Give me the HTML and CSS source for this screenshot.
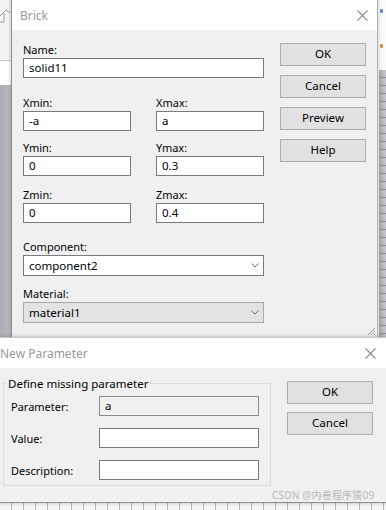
FILE: index.html
```html
<!DOCTYPE html>
<html>
<head>
	<meta charset="utf-8">
	<title>Brick</title>
	<link rel="stylesheet" href="styles.css">
</head>
<body>
<div class="desktop">
	<div class="bg bg-left">
		<div class="bg-left-top">
			<svg class="bg-icon" width="12" height="22" viewBox="0 0 12 22"><path d="M-2 14 L6 6 L10 9 M4 9 L4 18 L-2 18" fill="none" stroke="#9a9a9a" stroke-width="1"/></svg>
		</div>
		<div class="bg-left-white"></div>
		<div class="bg-left-grey"></div>
	</div>
	<div class="bg bg-right">
		<div class="bg-right-top">
			<span class="dot dot-blue"></span>
			<span class="dot dot-orange"></span>
		</div>
		<div class="bg-right-grid"></div>
	</div>
	<div class="bg bg-bottom"></div>

	<div class="window brick">
		<div class="titlebar">
			<span class="title">Brick</span>
			<svg class="close" width="11" height="11" viewBox="0 0 11 11"><path d="M0.5 0.5 L10.5 10.5 M10.5 0.5 L0.5 10.5" stroke="#8a8a8a" stroke-width="1.1" fill="none"/></svg>
		</div>
		<div class="brick-body">
			<div class="brick-form">
				<div class="field f-name">
					<label>Name:</label>
					<div class="input">solid11</div>
				</div>
				<div class="pair p-x">
					<div class="field">
						<label>Xmin:</label>
						<div class="input">-a</div>
					</div>
					<div class="field">
						<label>Xmax:</label>
						<div class="input">a</div>
					</div>
				</div>
				<div class="pair p-y">
					<div class="field">
						<label>Ymin:</label>
						<div class="input">0</div>
					</div>
					<div class="field">
						<label>Ymax:</label>
						<div class="input">0.3</div>
					</div>
				</div>
				<div class="pair p-z">
					<div class="field">
						<label>Zmin:</label>
						<div class="input">0</div>
					</div>
					<div class="field">
						<label>Zmax:</label>
						<div class="input">0.4</div>
					</div>
				</div>
				<div class="field f-comp">
					<label>Component:</label>
					<div class="select">
						<span>component2</span>
						<svg width="8" height="5" viewBox="0 0 8 5"><path d="M0.5 0.5 L4 4 L7.5 0.5" stroke="#6a6a6a" fill="none"/></svg>
					</div>
				</div>
				<div class="field f-mat">
					<label>Material:</label>
					<div class="select disabled">
						<span>material1</span>
						<svg width="8" height="5" viewBox="0 0 8 5"><path d="M0.5 0.5 L4 4 L7.5 0.5" stroke="#6a6a6a" fill="none"/></svg>
					</div>
				</div>
			</div>
			<div class="buttons brick-buttons">
				<div class="btn">OK</div>
				<div class="btn">Cancel</div>
				<div class="btn">Preview</div>
				<div class="btn">Help</div>
			</div>
		</div>
		<svg class="grip" width="10" height="10" viewBox="0 0 10 10"><path d="M9 2 L2 9 M9 5 L5 9 M9 8 L8 9" stroke="#9a9a9a" fill="none"/></svg>
	</div>

	<div class="window newparam">
		<div class="titlebar">
			<span class="title">New Parameter</span>
			<svg class="close" width="11" height="11" viewBox="0 0 11 11"><path d="M0.5 0.5 L10.5 10.5 M10.5 0.5 L0.5 10.5" stroke="#8a8a8a" stroke-width="1.1" fill="none"/></svg>
		</div>
		<div class="np-body">
			<fieldset class="group">
				<legend>Define missing parameter</legend>
				<div class="row">
					<label>Parameter:</label>
					<div class="input readonly">a</div>
				</div>
				<div class="row">
					<label>Value:</label>
					<div class="input"></div>
				</div>
				<div class="row">
					<label>Description:</label>
					<div class="input"></div>
				</div>
			</fieldset>
			<div class="buttons np-buttons">
				<div class="btn">OK</div>
				<div class="btn">Cancel</div>
			</div>
		</div>
	</div>

	<div class="watermark">CSDN @内卷程序猿09</div>
</div>
</body>
</html>
```

FILE: styles.css
```css
body{
	margin: 0;
	font-family: "Noto Sans", "Noto Sans CJK SC", sans-serif;
	font-size: 11px;
	color: #000;
}
.desktop{
	position: relative;
	width: 386px;
	height: 510px;
	overflow: hidden;
	background: #fff;
}

/* desktop behind the dialogs */
.bg{
	position: absolute;
}
.bg-left{
	left: 0;
	top: 0;
	width: 11px;
	height: 337px;
	display: flex;
	flex-direction: column;
}
.bg-left-top{
	height: 60px;
	background: #f4f4f4;
	border-bottom: 1px solid #c8c8c8;
}
.bg-icon{
	display: block;
	margin-top: 4px;
}
.bg-left-white{
	height: 24px;
	background: #fff;
}
.bg-left-grey{
	flex: 1;
	background: linear-gradient(90deg, #a9abb3, #babcc3);
}
.bg-right{
	right: 0;
	top: 0;
	width: 7px;
	height: 337px;
	display: flex;
	flex-direction: column;
}
.bg-right-top{
	height: 70px;
	background: #fafafa;
	position: relative;
}
.dot{
	position: absolute;
	left: 1px;
	width: 3px;
	height: 4px;
	border-radius: 1px;
}
.dot-blue{
	top: 9px;
	background: #6b8fc4;
}
.dot-orange{
	top: 44px;
	background: #d28a4a;
}
.bg-right-grid{
	flex: 1;
	background:
		repeating-linear-gradient(180deg, transparent 0 7px, #8d8f96 7px 8px),
		linear-gradient(90deg, #a7a9b0, #c3c5cb);
}
.bg-bottom{
	left: 0;
	top: 500px;
	width: 386px;
	height: 10px;
	background:
		repeating-linear-gradient(90deg, transparent 0 11px, #b4b4b4 11px 12px),
		#f6f6f6;
}

/* windows */
.window{
	position: absolute;
	background: #f0f0f0;
	display: flex;
	flex-direction: column;
	box-shadow: 0 0 4px rgba(0,0,0,0.25);
}
.titlebar{
	background: #fff;
	display: flex;
	align-items: center;
	justify-content: space-between;
	flex: none;
}
.title{
	color: #9a9a9a;
	font-size: 12px;
}
.close{
	display: block;
}

.brick{
	left: 11px;
	top: 0;
	width: 367px;
	height: 337px;
	border-left: 1px solid #8e8e8e;
	border-right: 1px solid #b0b0b0;
	box-sizing: border-box;
}
.brick .titlebar{
	height: 30px;
	padding: 0 9px 0 8px;
}
.brick-body{
	flex: 1;
	display: flex;
	padding: 12px 0 0 11px;
}
.brick-form{
	width: 241px;
	display: flex;
	flex-direction: column;
}
.field{
	display: flex;
	flex-direction: column;
}
.field label{
	height: 16px;
	line-height: 16px;
}
.input{
	height: 20px;
	box-sizing: border-box;
	border: 1px solid #7a7a7a;
	background: #fff;
	padding: 0 5px;
	line-height: 18px;
	font-size: 11.5px;
}
.pair{
	display: grid;
	grid-template-columns: 108px 108px;
	justify-content: space-between;
}
.p-x{
	margin-top: 17px;
}
.p-y{
	margin-top: 9px;
}
.p-z{
	margin-top: 11px;
}
.f-comp{
	margin-top: 16px;
}
.f-mat{
	margin-top: 10px;
}
.select{
	height: 21px;
	box-sizing: border-box;
	border: 1px solid #7a7a7a;
	background: #fff;
	padding: 0 4px 0 5px;
	display: flex;
	align-items: center;
	justify-content: space-between;
	font-size: 11.5px;
}
.select.disabled{
	background: #e3e3e3;
	border-color: #a8a8a8;
}
.buttons{
	display: flex;
	flex-direction: column;
	gap: 9px;
}
.btn{
	height: 23px;
	box-sizing: border-box;
	border: 1px solid #adadad;
	background: #e1e1e1;
	text-align: center;
	line-height: 20px;
	font-size: 11.5px;
}
.brick-buttons{
	width: 86px;
	margin: 1px 0 0 16px;
}
.grip{
	position: absolute;
	right: 1px;
	bottom: 1px;
}

.newparam{
	left: -1px;
	top: 337px;
	width: 389px;
	height: 166px;
	border-top: 1px solid #c8c8c8;
	border-bottom: 1px solid #8e8e8e;
	box-sizing: border-box;
}
.newparam .titlebar{
	height: 30px;
	padding: 0 12px 0 1px;
}
.np-body{
	flex: 1;
	display: flex;
	padding: 8px 0 0 4px;
}
.group{
	margin: 0;
	width: 268px;
	height: 110px;
	box-sizing: border-box;
	border: 1px solid #dcdcdc;
	padding: 5px 0 0 7px;
	display: flex;
	flex-direction: column;
	gap: 12px;
}
.group legend{
	padding: 0 1px;
	margin-left: -4px;
	font-size: 11.5px;
}
.row{
	display: flex;
	align-items: center;
}
.row label{
	width: 88px;
}
.row .input{
	width: 160px;
}
.input.readonly{
	background: #f0f0f0;
	border-color: #8a8a8a;
}
.np-buttons{
	width: 86px;
	margin: 5px 0 0 16px;
	gap: 8px;
}
.watermark{
	position: absolute;
	left: 272px;
	top: 487px;
	font-size: 10px;
	color: #b9b9b9;
	letter-spacing: 0.2px;
}
```
